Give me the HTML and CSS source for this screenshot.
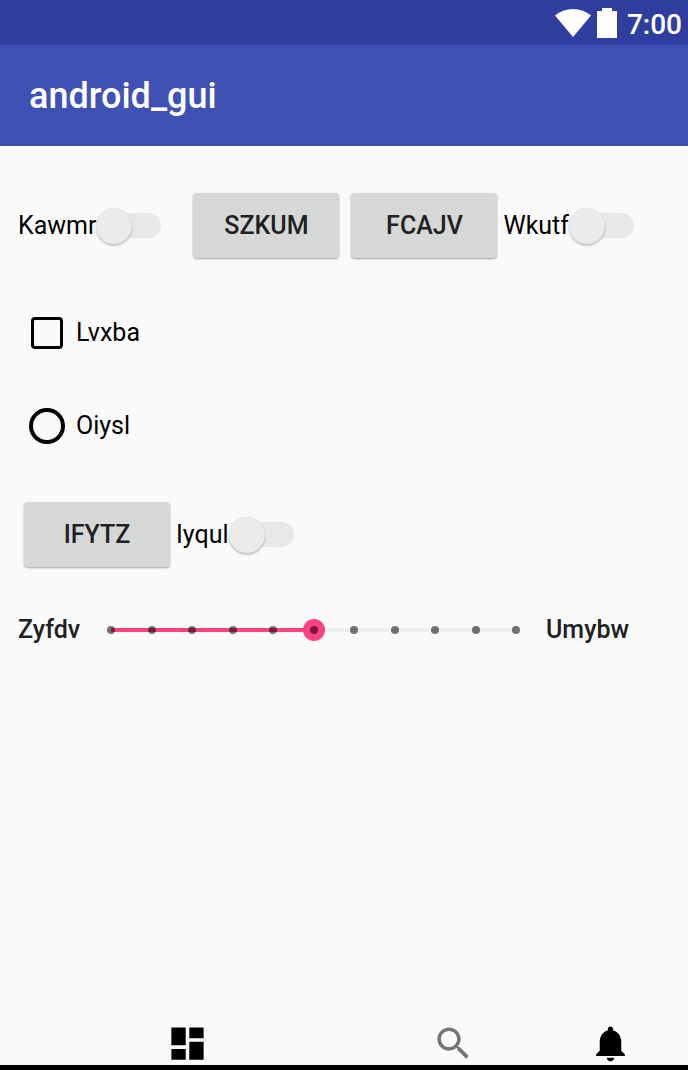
FILE: index.html
```html
<!DOCTYPE html>
<html lang="en">
<head>
<meta charset="utf-8">
<meta name="viewport" content="width=device-width, initial-scale=1">
<title>android_gui</title>
<link rel="stylesheet" href="styles.css">
</head>
<body>
<div class="status-bar">
  <svg class="status-wifi" viewBox="0 0 36 28" aria-hidden="true"><path d="M0 6.500C5 2.300 11 0 18 0s13 2.300 18 6.500L18 28z"/></svg>
  <svg class="status-battery" viewBox="0 0 20 30" aria-hidden="true"><path d="M5 0h10v3h5v27H0V3h5z"/></svg>
  <span class="clock">7:00</span>
</div>
<header class="app-bar"><h1 class="app-title">android_gui</h1></header>
<main class="content">
  <div class="row">
    <label class="switch-label">Kawmr<input class="switch" type="checkbox" role="switch"></label>
    <button class="button button-spaced" type="button">SZKUM</button>
    <button class="button" type="button">FCAJV</button>
    <label class="switch-label">Wkutf<input class="switch" type="checkbox" role="switch"></label>
  </div>
  <label class="row choice"><input class="checkbox" type="checkbox">Lvxba</label>
  <label class="row choice"><input class="radio" type="radio" name="option">Oiysl</label>
  <div class="row row-second">
    <button class="button" type="button">IFYTZ</button>
    <label class="switch-label">Iyqul<input class="switch" type="checkbox" role="switch"></label>
  </div>
  <div class="row row-slider">
    <label class="slider-label" for="level">Zyfdv</label>
    <div class="slider">
      <input class="slider-input" id="level" type="range" min="0" max="10" value="5">
      <div class="ticks" aria-hidden="true">
        <i class="tick"></i><i class="tick"></i><i class="tick"></i><i class="tick"></i><i class="tick"></i><i class="tick"></i><i class="tick"></i><i class="tick"></i><i class="tick"></i><i class="tick"></i><i class="tick"></i>
      </div>
    </div>
    <span class="slider-label">Umybw</span>
  </div>
</main>
<nav class="bottom-nav">
  <button class="nav-item" type="button" aria-label="Dashboard"><svg class="nav-icon" viewBox="0 0 24 24"><path d="M3 13h8V3H3v10zm0 8h8v-6H3v6zm10 0h8V11h-8v10zm0-18v6h8V3h-8z"/></svg></button>
  <button class="nav-item nav-item-muted" type="button" aria-label="Search"><svg class="nav-icon" viewBox="0 0 24 24"><path d="M15.500 14h-.79l-.28-.27C15.410 12.590 16 11.110 16 9.500 16 5.910 13.090 3 9.500 3S3 5.910 3 9.500 5.910 16 9.500 16c1.610 0 3.090-.59 4.230-1.570l.27.28v.79l5 4.990L20.490 19l-4.990-5zm-6 0C7.010 14 5 11.990 5 9.500S7.010 5 9.500 5 14 7.010 14 9.500 11.990 14 9.500 14z"/></svg></button>
  <button class="nav-item" type="button" aria-label="Notifications"><svg class="nav-icon" viewBox="0 0 24 24"><path d="M12 22c1.100 0 2-.9 2-2h-4c0 1.100.89 2 2 2zm6-6v-5c0-3.070-1.640-5.640-4.500-6.320V4c0-.83-.67-1.500-1.500-1.500s-1.500.67-1.500 1.500v.68C7.630 5.360 6 7.920 6 11v5l-2 2v1h16v-1l-2-2z"/></svg></button>
</nav>
</body>
</html>
```
FILE: styles.css
```css
* { box-sizing: border-box; }
body {
  margin: 0;
  min-height: 100vh;
  display: flex;
  flex-direction: column;
  background: #fafafa;
  color: #000;
  font: 25px/30px Roboto, "Noto Sans", sans-serif;
}
button, input { margin: 0; font: inherit; }
.status-bar {
  display: flex;
  justify-content: flex-end;
  align-items: center;
  height: 45px;
  padding-right: 6px;
  background: #303f9f;
  color: #fff;
}
.status-wifi { width: 36px; height: 28px; margin-right: 6px; fill: #fff; }
.status-battery { width: 20px; height: 30px; margin-right: 10px; fill: #fff; }
.clock { padding-top: 5px; font-size: 28px; line-height: 32px; font-weight: 500; }
.app-bar {
  display: flex;
  align-items: center;
  min-height: 101px;
  padding: 0 29px;
  background: #3f51b5;
  color: #fff;
}
.app-title { margin: 0; font-size: 36px; line-height: 42px; font-weight: 500; }
.content { flex: 1; padding: 47px 18px 0; }
.row { display: flex; align-items: center; }
.switch-label { display: flex; align-items: center; height: 36px; }
.switch {
  appearance: none;
  position: relative;
  display: flex;
  align-items: center;
  width: 65px;
  height: 36px;
}
.switch::before {
  content: "";
  width: 53px;
  height: 25px;
  margin-left: 12px;
  border-radius: 13px;
  background: #e8e8e8;
}
.switch::after {
  content: "";
  position: absolute;
  left: 0;
  top: 0;
  width: 36px;
  height: 36px;
  border-radius: 50%;
  background: #ebebeb;
  box-shadow: 0 2px 2px rgba(0, 0, 0, 0.2), 0 0 1px rgba(0, 0, 0, 0.15);
}
.switch:checked::after { left: auto; right: 0; background: #ff4081; }
.button {
  width: 146px;
  height: 65px;
  margin: 0 6px;
  padding: 0;
  border: 0;
  border-radius: 4px;
  background: #d6d8d7;
  color: #212121;
  font-weight: 500;
  box-shadow: 0 1px 2px rgba(0, 0, 0, 0.35);
}
.button-spaced { margin-left: 32px; }
.choice { width: fit-content; height: 36px; margin-top: 57px; }
.checkbox, .radio { appearance: none; background: transparent; }
.checkbox {
  width: 32px;
  height: 32px;
  margin: 0 13px;
  border: 3px solid #000;
  border-radius: 4px;
}
.radio {
  width: 36px;
  height: 36px;
  margin: 0 11px;
  border: 4px solid #000;
  border-radius: 50%;
}
.checkbox:checked { background: #ff4081; }
.radio:checked { background: radial-gradient(#ff4081 8px, transparent 9px); }
.row-second { margin-top: 58px; }
.row-slider { margin-top: 48px; padding-right: 41px; }
.slider-label { color: #212121; font-weight: 500; }
.slider { position: relative; flex: 1; height: 30px; margin: 0 19px 0 20px; }
.slider-input {
  appearance: none;
  display: block;
  width: 100%;
  height: 30px;
  background: linear-gradient(to right, #ff4081 50%, #f0f0f0 50%) center / calc(100% - 22px) 4px no-repeat;
}
.slider-input::-webkit-slider-thumb {
  appearance: none;
  width: 22px;
  height: 22px;
  border-radius: 50%;
  background: #ff4081;
}
.ticks {
  position: absolute;
  inset: 0;
  display: flex;
  justify-content: space-between;
  align-items: center;
  padding: 0 7px;
  pointer-events: none;
}
.tick { width: 8px; height: 8px; border-radius: 50%; background: rgba(0, 0, 0, 0.54); }
.bottom-nav {
  display: grid;
  grid-template-columns: 374fr 159fr 155fr;
  border-bottom: 5px solid #000;
}
.nav-item {
  display: flex;
  justify-content: center;
  padding: 0;
  border: 0;
  background: none;
  color: #000;
}
.nav-item-muted { color: #757575; }
.nav-icon { width: 43px; height: 43px; fill: currentColor; }
```
